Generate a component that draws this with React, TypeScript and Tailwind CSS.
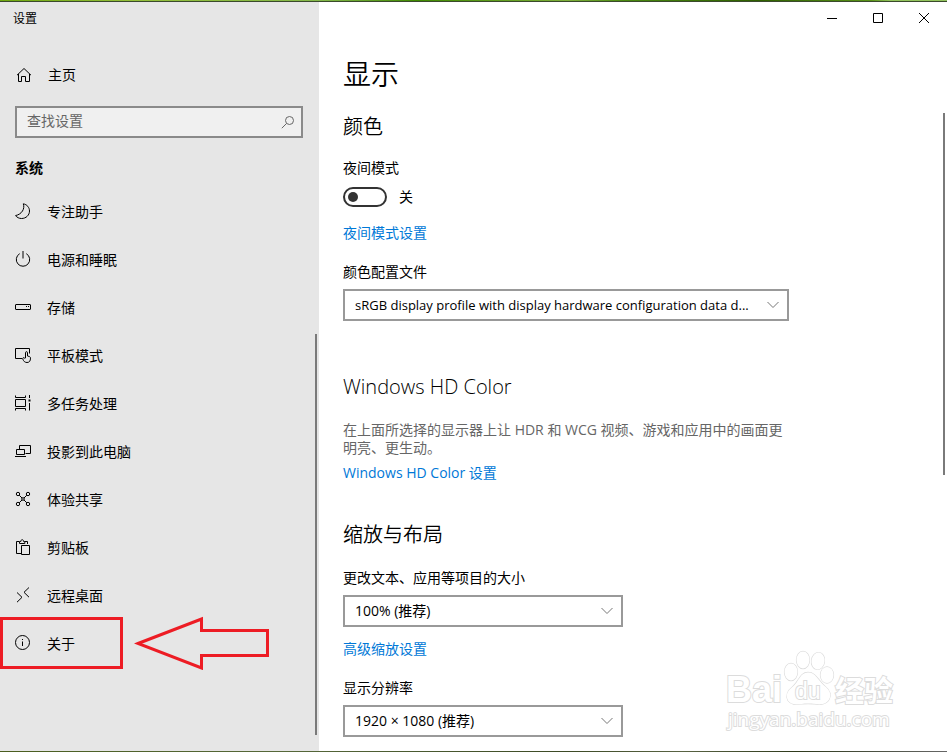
import * as React from 'react'

const navItems = [
    {
        name: "专注助手",
        icon: <path d="M8.300.8c1.800 5-1.500 10.500-7.800 11.800 1.500 1.800 3.500 2.900 6 2.900 4.600 0 8-3.400 8-7.500 0-3.500-2.500-6.500-6.200-7.200z" />,
    },
    {
        name: "电源和睡眠",
        icon: <><path d="M4.700 2.700a6.700 6.700 0 1 0 6.600 0" /><path d="M8 0v7.500" /></>,
    },
    {
        name: "存储",
        icon: <><rect x=".5" y="5.500" width="15" height="5" rx=".5" /><path d="M11 7.500h1M13 7.500h1" /></>,
    },
    {
        name: "平板模式",
        icon: <><path d="M7 11.500H.5v-10h14v5" /><path d="M10.500 11V5.700c0-1.400 2-1.400 2 0V9l1.800.5c.9.300 1.200.8 1.200 1.600 0 2.700-1 4.400-3.500 4.400-2.200 0-3.300-1.200-4.200-3.400-.5-1.300.7-1.900 1.500-1z" /></>,
    },
    {
        name: "多任务处理",
        icon: <><path d="M.5.5v2h10v-2M.5 15.500v-2h10v2M.5 4.500h10v7H.5zM14.500 0v3M14.500 8v7.500" /><rect x="14" y="5" width="1" height="1" /></>,
    },
    {
        name: "投影到此电脑",
        icon: <><path d="M4.500 6.500v-4h11v8h-5" /><path d="M1.500 6.500h8v5h-8zM0 13.500h11" /></>,
    },
    {
        name: "体验共享",
        icon: <><circle cx="3" cy="3" r="1.700" /><circle cx="13" cy="3" r="1.700" /><circle cx="3" cy="13" r="1.700" /><circle cx="13" cy="13" r="1.700" /><circle cx="8" cy="8" r="1.300" /><path d="M4.200 4.200 7 7M11.800 4.200 9 7M4.200 11.800 7 9M11.800 11.800 9 9" /></>,
    },
    {
        name: "剪贴板",
        icon: <><path d="M6 14.500H1.500v-12H4M10 2.500h2.500V5" /><path d="M4.500 4.500v-2h1.300c0-2.400 2.800-2.400 2.800 0h1.200v2z" /><path d="M6.500 6.500h8v9h-8z" /></>,
    },
    {
        name: "远程桌面",
        icon: <path d="m2 5.500 5 4.800-5 4.900M14 .5 9 5.300l5 4.900" />,
    },
    {
        name: "关于",
        icon: <><circle cx="7.500" cy="7.500" r="7" /><path d="M7.500 6.500V11M7.500 4v1" /></>,
    },
]

const Icon = ({ children }: any) => (
    <svg width="16" height="16" viewBox="0 0 16 16" fill="none" stroke="#000" className="mb-0.5 shrink-0" aria-hidden="true">
        {children}
    </svg>
)

const Select = ({ id, label, value, className = "" }: any) => (
    <div>
        <label htmlFor={id} className="mt-[19px] block">{label}</label>
        <div className={"relative mt-[7px] w-full " + className}>
            <select id={id} className="block h-8 w-full appearance-none truncate border-2 border-[#999] bg-white pl-2.5 pr-7 outline-none">
                <option>{value}</option>
            </select>
            <svg width="12" height="8" viewBox="0 0 12 8" fill="none" stroke="#777" className="pointer-events-none absolute right-2.5 top-3" aria-hidden="true">
                <path d="m.5 1 5.500 5.500L11.500 1" />
            </svg>
        </div>
    </div>
)

// 红框和箭头标注
const Callout = () => (
    <>
        <span className="pointer-events-none absolute -top-[3px] left-0 h-[52px] w-[123px] border-3 border-[#ed1c24]" />
        <svg width="136" height="54" viewBox="0 0 136 54" fill="none" stroke="#ed1c24" strokeWidth="3" className="pointer-events-none absolute -top-1 left-[134px]" aria-hidden="true">
            <path d="M4 27.500 67.500 3v11.500h66v25h-66V52z" />
        </svg>
    </>
)

const Sidebar = () => (
    <aside className="relative flex w-[319px] shrink-0 flex-col bg-[#e6e6e6]">
        <header className="flex h-[34px] items-center pl-[13px] text-xs">设置</header>
        <a href="#home" className="mt-[18px] flex h-[42px] items-center gap-4 pl-4">
            <Icon><path d="M1 9.200 8 2.500l7 6.700M2.500 8v7.500h3v-5h4v5h4V8" /></Icon>
            主页
        </a>
        <div className="relative ml-[15px] mr-4 mt-2.5">
            <input type="text" aria-label="查找设置" placeholder="查找设置" className="block h-8 w-full border-2 border-[#8a8a8a] bg-[#f0f0f0] pb-1 pl-2.5 pr-8 outline-none placeholder:text-[#666]" />
            <svg width="14" height="14" viewBox="0 0 14 14" fill="none" stroke="#666" className="absolute right-2 top-[9px]" aria-hidden="true">
                <circle cx="8.500" cy="5.500" r="4" />
                <path d="M5.500 8.500.8 13.200" />
            </svg>
        </div>
        <h2 className="mt-5 pl-[15px] font-bold">系统</h2>
        <nav className="mt-2.5">
            {navItems.map(({ name, icon }) => (
                <a key={name} href={"#" + name} className="relative flex h-12 items-center gap-4 pl-[15px]">
                    <Icon>{icon}</Icon>
                    {name}
                    {name === "关于" && <Callout />}
                </a>
            ))}
        </nav>
        <span className="absolute bottom-4 right-0.5 top-[332px] w-0.5 bg-[#7a7a7a]" />
    </aside>
)

const WindowButtons = () => (
    <div className="flex h-8 justify-end">
        <button type="button" aria-label="最小化" className="flex w-[46px] items-center justify-center">
            <svg width="10" height="10" viewBox="0 0 10 10" stroke="#000"><path d="M0 5.500h10" /></svg>
        </button>
        <button type="button" aria-label="最大化" className="flex w-[46px] items-center justify-center">
            <svg width="10" height="10" viewBox="0 0 10 10" fill="none" stroke="#000"><path d="M.5.5h9v9h-9z" /></svg>
        </button>
        <button type="button" aria-label="关闭" className="flex w-[46px] items-center justify-center">
            <svg width="10" height="10" viewBox="0 0 10 10" stroke="#000"><path d="m0 0 10 10M10 0 0 10" /></svg>
        </button>
    </div>
)

const Watermark = () => (
    <svg width="180" height="90" viewBox="0 0 180 90" fill="#fff" stroke="#dcdcdc" strokeWidth="2" className="pointer-events-none absolute bottom-4 right-[47px] [paint-order:stroke]">
        <text x="6" y="57" fontSize="36" fontWeight="700" fontFamily="Liberation Sans">Bai</text>
        <g strokeWidth="1.300">
            <ellipse cx="71" cy="27" rx="6.500" ry="8.500" />
            <ellipse cx="83" cy="15" rx="6.500" ry="8.500" />
            <ellipse cx="98" cy="16" rx="6.500" ry="8.500" transform="rotate(8 98 16)" />
            <ellipse cx="107" cy="30" rx="6.500" ry="8" />
            <path d="M88 27.500c8 0 10 8 16 13s8 9 5 14c-4 7-12 4-21 4s-16 3-20-3c-3-6 0-10 5-14 6-5 7-14 15-14z" />
        </g>
        <text x="75" y="54" fontSize="23" fontWeight="400" fontFamily="Liberation Sans">du</text>
        <text x="115" y="57" fontSize="29" fontWeight="700" fontFamily="Noto Sans CJK SC">经验</text>
        <text x="8" y="81" fontSize="19" fontFamily="Open Sans">jingyan.baidu.com</text>
    </svg>
)

const Display = () => {
    const [night, setNight] = React.useState(false)

    return (
        <main className="relative min-w-0 flex-1 bg-white">
            <WindowButtons />
            <div className="px-6 pb-3.5">
                <h1 className="mt-5 text-[28px] leading-10 font-[350]">显示</h1>

                <h2 className="mt-[19px] text-xl leading-7 font-[350]">颜色</h2>
                <p className="mt-[17px]">夜间模式</p>
                <label className="mt-[9px] flex h-5 w-fit items-center gap-3">
                    <input
                        type="checkbox"
                        role="switch"
                        aria-label="夜间模式"
                        checked={night}
                        onChange={() => setNight(!night)}
                        className="peer sr-only"
                    />
                    <span className="flex h-5 w-11 items-center rounded-full border-2 border-[#333] px-[3px] peer-checked:justify-end">
                        <span className="size-2.5 rounded-full bg-[#333]" />
                    </span>
                    {night ? "开" : "关"}
                </label>
                <a href="#night" className="mt-4 block w-fit text-[#0078d7]">夜间模式设置</a>
                <Select id="profile" label="颜色配置文件" value="sRGB display profile with display hardware configuration data d..." className="max-w-[446px] text-[13px]" />

                <h2 className="mt-[52px] text-xl leading-7 font-[350]">Windows HD Color</h2>
                <p className="mt-5 max-w-[446px] leading-[18px] text-[#666]">在上面所选择的显示器上让 HDR 和 WCG 视频、游戏和应用中的画面更明亮、更生动。</p>
                <a href="#hd-color" className="mt-1.5 block w-fit text-[#0078d7]">Windows HD Color 设置</a>

                <h2 className="mt-[38px] text-xl leading-7 font-[350]">缩放与布局</h2>
                <Select id="scale" label="更改文本、应用等项目的大小" value="100% (推荐)" className="max-w-[280px]" />
                <a href="#scaling" className="mt-3 block w-fit text-[#0078d7]">高级缩放设置</a>
                <Select id="resolution" label="显示分辨率" value="1920 × 1080 (推荐)" className="max-w-[280px]" />
            </div>
            <span className="absolute right-0.5 top-[111px] h-[362px] w-0.5 bg-[#7a7a7a]" />
            <Watermark />
        </main>
    )
}

const App: React.FC = () => {
    return (
        <div className="flex min-h-screen flex-col font-['Open_Sans','Noto_Sans_CJK_SC',sans-serif] text-sm leading-5 text-black">
            <div className="h-0.5 border-b border-[#3a4a2c] bg-[linear-gradient(90deg,#6fa80f,#94bf3a_14%,#84b84a_34%,#3f8a00_44%,#7fb03a_60%,#4a8a10_66%,#2f5f00_80%,#5a9418_92%,#93c45c_94%)]" />
            <div className="flex flex-1">
                <Sidebar />
                <Display />
            </div>
            <div className="h-px bg-[linear-gradient(90deg,#4a5d1f,#56683a_30%,#3d4a26_60%,#5a6444_72%,#2f3a1c_84%,#666)]" />
        </div>
    )
}

export default App
